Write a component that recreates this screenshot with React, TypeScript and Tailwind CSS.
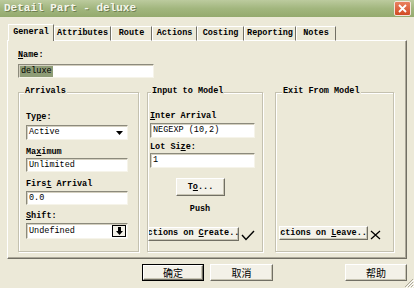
import type { ReactNode } from "react";

const mono = "font-['Liberation_Mono',monospace] font-bold text-[8.5px] leading-none text-black";
const cjk = "font-['Noto_Sans_CJK_SC',sans-serif] text-[10px] leading-none text-black";

// sunken white edit box, classic look
const sunken =
  "bg-white border border-t-[#8c8a7c] border-l-[#8c8a7c] border-r-[#f6f4ea] border-b-[#f6f4ea] shadow-[inset_1px_1px_0_#d4d0c0]";
// raised push button
const raised =
  "bg-[#f3f1e8] border border-t-white border-l-white border-r-[#716f64] border-b-[#716f64] shadow-[inset_-1px_-1px_0_#c8c5b4]";

function Key({ children }: { children: ReactNode }) {
  return <span className="underline underline-offset-[1px]">{children}</span>;
}

function Label({ children, className = "" }: { children: ReactNode; className?: string }) {
  return (
    <div className={`h-[11px] flex items-center ${mono} ${className}`}>
      <span className="whitespace-pre">{children}</span>
    </div>
  );
}

function Field({ value, className = "" }: { value: string; className?: string }) {
  return (
    <div className={`flex items-center pl-[2px] ${sunken} ${mono} font-normal ${className}`}>
      <span className="whitespace-pre">{value}</span>
    </div>
  );
}

function Group({
  title,
  legendOffset,
  className = "",
  children,
}: {
  title: string;
  legendOffset: string;
  className?: string;
  children: ReactNode;
}) {
  return (
    <fieldset
      className={`h-[165px] border border-[#c4c1b0] shadow-[inset_1px_1px_0_#fff,1px_1px_0_#fff] ${className}`}
    >
      <legend className={`px-[1px] h-[10px] bg-[#ece9d8] ${legendOffset} ${mono}`}>{title}</legend>
      {children}
    </fieldset>
  );
}

function Tab({ label, w, active = false }: { label: string; w: string; active?: boolean }) {
  return (
    <div
      className={`${w} flex items-center justify-center border-l border-t border-r border-l-white border-t-white border-r-[#716f64] ${mono} ${
        active ? "h-[17px] bg-[#ece9d8] pb-[1px]" : "h-[15px] border-b border-b-white"
      }`}
    >
      {label}
    </div>
  );
}

function DownArrow() {
  return (
    <svg width="7" height="8" viewBox="0 0 7 8">
      <rect x="2" y="0" width="3" height="4" fill="#000" />
      <polygon points="0,4 7,4 3.5,8" fill="#000" />
    </svg>
  );
}

export default function App() {
  return (
    <div className="w-[414px] h-[288px] overflow-hidden flex flex-col bg-[#ece9d8] relative">
      {/* title bar */}
      <div className="h-[17px] shrink-0 flex items-center justify-between pl-[4px] pr-[3px] bg-gradient-to-b from-[#bccb9e] via-[#a2b67e] to-[#94aa6e]">
        <span className="font-['Liberation_Mono',monospace] font-bold text-[11px] leading-none text-[#f4f6ec] [text-shadow:1px_1px_0_#6f7f52]">
          Detail Part - deluxe
        </span>
        <div className="w-[17px] h-[15px] rounded-[2px] border border-[#f2e4dc] bg-gradient-to-b from-[#e9805e] to-[#d14a22] flex items-center justify-center">
          <svg width="9" height="9" viewBox="0 0 9 9">
            <path d="M1 1 L8 8 M8 1 L1 8" stroke="#fff" strokeWidth="1.8" />
          </svg>
        </div>
      </div>

      <div className="flex-1 flex flex-col px-[7px] pt-[7px]">
        {/* tabs */}
        <div className="flex items-end h-[17px] -mb-px ml-[1px] relative z-10">
          <Tab label="General" w="w-[46px]" active />
          <Tab label="Attributes" w="w-[57px]" />
          <Tab label="Route" w="w-[41px]" />
          <Tab label="Actions" w="w-[45px]" />
          <Tab label="Costing" w="w-[47px]" />
          <Tab label="Reporting" w="w-[52px]" />
          <Tab label="Notes" w="w-[40px]" />
        </div>

        {/* tab page */}
        <div className="h-[219px] border border-t-white border-l-white border-r-[#716f64] border-b-[#716f64] shadow-[inset_-1px_-1px_0_#aca899] pt-[8px] pl-[10px]">
          <div className={`h-[12px] flex items-center ${mono}`}>
            <span>
              <Key>N</Key>ame:
            </span>
          </div>
          <div className={`mt-[3px] w-[136px] h-[14px] flex items-center pl-[1px] ${sunken}`}>
            <span className={`${mono} font-normal px-[1px] h-[11px] flex items-center bg-[#8e9c76] text-[#eef1e2]`}>
              deluxe
            </span>
          </div>

          <div className="mt-[9px] flex">
            <Group title="Arrivals" legendOffset="ml-[5px]" className="w-[121px]">
              <div className="pl-[7px] flex flex-col">
                <Label className="mt-[15px]">
                  Ty<Key>p</Key>e:
                </Label>
                <div className={`mt-[2px] w-[102px] h-[15px] flex items-center justify-between pl-[2px] pr-[1px] ${sunken} ${mono} font-normal`}>
                  Active
                  <div className="w-[14px] h-[11px] flex items-center justify-center">
                    <svg width="7" height="4" viewBox="0 0 7 4">
                      <polygon points="0,0 7,0 3.5,4" fill="#000" />
                    </svg>
                  </div>
                </div>
                <Label className="mt-[7px]">
                  Ma<Key>x</Key>imum
                </Label>
                <Field value="Unlimited" className="w-[102px] h-[14px]" />
                <Label className="mt-[7px]">
                  Firs<Key>t</Key> Arrival
                </Label>
                <Field value="0.0" className="mt-[1px] w-[102px] h-[14px]" />
                <Label className="mt-[6px]">
                  <Key>S</Key>hift:
                </Label>
                <div className={`mt-[1px] w-[102px] h-[16px] flex items-center justify-between pl-[2px] pr-[1px] ${sunken} ${mono} font-normal`}>
                  Undefined
                  <div className="w-[14px] h-[12px] border border-black bg-[#f3f1e8] flex items-center justify-center">
                    <DownArrow />
                  </div>
                </div>
              </div>
            </Group>

            <Group title="Input to Model" legendOffset="ml-[3px]" className="ml-[8px] w-[116px]">
              <div className="flex flex-col">
                <Label className="mt-[14px] pl-[2px]">
                  <Key>I</Key>nter Arrival
                </Label>
                <Field value="NEGEXP (10,2)" className="mt-[1px] ml-[2px] w-[105px] h-[15px]" />
                <Label className="mt-[4px] pl-[2px]">
                  Lot Si<Key>z</Key>e:
                </Label>
                <Field value="1" className="ml-[2px] w-[105px] h-[15px]" />
                <div className={`mt-[10px] ml-[28px] w-[49px] h-[18px] flex items-center justify-center ${raised} ${mono}`}>
                  <span>
                    T<Key>o</Key>...
                  </span>
                </div>
                <div className={`mt-[8px] h-[10px] w-[104px] flex items-center justify-center ${mono}`}>Push</div>
                <div className="mt-[12px] flex items-center">
                  <div className={`w-[91px] h-[14px] overflow-hidden flex items-center justify-center ${raised}`}>
                    <span className={`whitespace-nowrap ${mono}`}>
                      Actions on <Key>C</Key>reate...
                    </span>
                  </div>
                  <svg width="14" height="11" viewBox="0 0 14 11" className="ml-[2px] mt-[4px]">
                    <path d="M1 5 L5 9.5 L13 1" stroke="#000" strokeWidth="1.4" fill="none" />
                  </svg>
                </div>
              </div>
            </Group>

            <Group title="Exit From Model" legendOffset="ml-[6px]" className="ml-[12px] w-[119px]">
              <div className="flex items-center mt-[129px] pl-[3px]">
                <div className={`w-[89px] h-[14px] overflow-hidden flex items-center justify-center ${raised}`}>
                  <span className={`whitespace-nowrap ${mono}`}>
                    Actions on <Key>L</Key>eave...
                  </span>
                </div>
                <svg width="11" height="10" viewBox="0 0 11 10" className="ml-[2px] mt-[3px]">
                  <path d="M1 1 L10 9 M10 1 L1 9" stroke="#000" strokeWidth="1.3" />
                </svg>
              </div>
            </Group>
          </div>
        </div>

        {/* dialog buttons */}
        <div className="mt-[5px] flex justify-end">
          <div className="w-[62px] h-[17px] border border-black">
            <div className={`w-full h-full flex items-center justify-center ${raised} ${cjk}`}>确定</div>
          </div>
          <div className={`ml-[6px] w-[63px] h-[17px] flex items-center justify-center ${raised} ${cjk}`}>取消</div>
          <div className={`ml-[72px] w-[62px] h-[17px] flex items-center justify-center ${raised} ${cjk}`}>帮助</div>
        </div>
      </div>

      {/* size grip */}
      <svg width="11" height="11" viewBox="0 0 11 11" className="absolute right-0 bottom-0">
        <path d="M10 2 L2 10 M10 5 L5 10 M10 8 L8 10" stroke="#aca899" strokeWidth="1" />
        <path d="M11 3 L3 11 M11 6 L6 11 M11 9 L9 11" stroke="#fff" strokeWidth="1" />
      </svg>
    </div>
  );
}
